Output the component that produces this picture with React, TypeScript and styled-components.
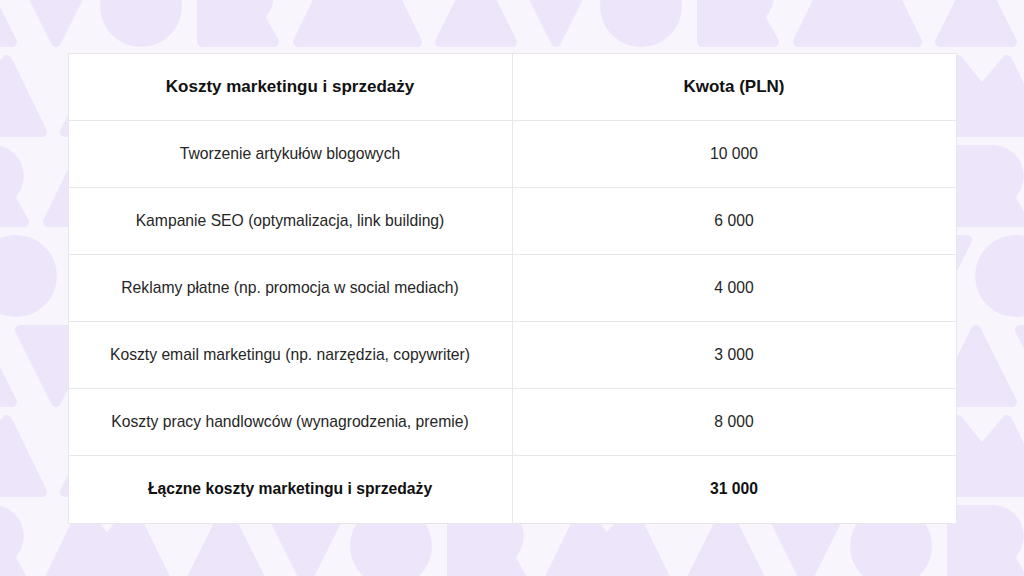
import React from 'react';
import styled, { createGlobalStyle } from 'styled-components';

const GlobalStyle = createGlobalStyle`
  html, body {
    margin: 0;
    padding: 0;
  }
  body {
    font-family: 'Liberation Sans', Arial, sans-serif;
    background: #f8f5fd;
  }
`;

const costs = [
  { name: 'Tworzenie artykułów blogowych', amount: '10 000' },
  { name: 'Kampanie SEO (optymalizacja, link building)', amount: '6 000' },
  { name: 'Reklamy płatne (np. promocja w social mediach)', amount: '4 000' },
  { name: 'Koszty email marketingu (np. narzędzia, copywriter)', amount: '3 000' },
  { name: 'Koszty pracy handlowców (wynagrodzenia, premie)', amount: '8 000' },
];

// background letters: each row repeats the same sequence, shifted by 125px
const SHAPE_COLOR = '#ede6fb';

const Letter = ({ kind, x, y }: { kind: string; x: number; y: number }) => {
  const common = {
    fill: SHAPE_COLOR,
    stroke: SHAPE_COLOR,
    strokeWidth: 10,
    strokeLinejoin: 'round' as const,
  };
  if (kind === 'O') return <circle cx={x + 41} cy={y + 41} r={41} fill={SHAPE_COLOR} />;
  if (kind === 'A')
    return <polygon points={`${x + 5},${y + 77} ${x + 41},${y + 5} ${x + 77},${y + 77}`} {...common} />;
  if (kind === 'V')
    return <polygon points={`${x + 5},${y + 5} ${x + 77},${y + 5} ${x + 41},${y + 77}`} {...common} />;
  if (kind === 'M')
    return (
      <polygon
        points={`${x + 5},${y + 77} ${x + 40},${y + 5} ${x + 64},${y + 35} ${x + 89},${y + 5} ${x + 124},${y + 77}`}
        {...common}
      />
    );
  return (
    <path
      d={`M${x + 5} ${y + 5} H${x + 46} A26 26 0 0 1 ${x + 67} ${y + 46} L${x + 63} ${y + 52} L${x + 77} ${y + 77} H${x + 5} Z`}
      {...common}
    />
  );
};

const sequence: [string, number][] = [
  ['A', -65],
  ['V', 15],
  ['O', 100],
  ['R', 197],
  ['M', 293],
];

const Pattern = () => {
  const items: React.ReactNode[] = [];
  for (let row = 0; row < 8; row++) {
    const top = -35 + row * 90;
    const shift = (row * 125) % 500;
    for (let k = -2; k < 3; k++) {
      sequence.forEach(([kind, dx]) => {
        items.push(<Letter key={`${row}-${k}-${kind}`} kind={kind} x={shift + k * 500 + dx} y={top} />);
      });
    }
  }
  return (
    <Backdrop viewBox="0 0 1024 576" preserveAspectRatio="xMinYMin slice">
      {items}
    </Backdrop>
  );
};

const App = () => {
  return (
    <Page>
      <GlobalStyle />
      <Pattern />
      <CostTable>
        <thead>
          <Row>
            <HeadCell>Koszty marketingu i sprzedaży</HeadCell>
            <HeadCell>Kwota (PLN)</HeadCell>
          </Row>
        </thead>
        <tbody>
          {costs.map((item) => (
            <Row key={item.name}>
              <Cell>{item.name}</Cell>
              <Cell>{item.amount}</Cell>
            </Row>
          ))}
          <Row>
            <Cell $bold>Łączne koszty marketingu i sprzedaży</Cell>
            <Cell $bold>31 000</Cell>
          </Row>
        </tbody>
      </CostTable>
    </Page>
  );
};

export default App;

const Page = styled.div`
  position: relative;
  width: 100vw;
  height: 100vh;
  overflow: hidden;

  display: flex;
  align-items: center;
  justify-content: center;
`;

const Backdrop = styled.svg`
  position: absolute;
  inset: 0;
  width: 100%;
  height: 100%;
`;

const CostTable = styled.table`
  position: relative;
  z-index: 1;
  width: 889px;
  height: 471px;
  table-layout: fixed;
  border-collapse: collapse;
  background: #ffffff;
  border: 1px solid #ebe7f1;
`;

const Row = styled.tr`
  height: 67px;
`;

const Cell = styled.td<{ $bold?: boolean }>`
  padding: 0 16px;
  border: 1px solid #e8e8ea;
  text-align: center;
  vertical-align: middle;

  font-size: 15.7px;
  font-weight: ${(props) => (props.$bold ? 700 : 400)};
  color: ${(props) => (props.$bold ? '#111111' : '#262626')};
`;

const HeadCell = styled.th`
  padding: 0 16px;
  border: 1px solid #e8e8ea;
  text-align: center;
  vertical-align: middle;

  font-size: 17px;
  font-weight: 700;
  color: #111111;
`;
